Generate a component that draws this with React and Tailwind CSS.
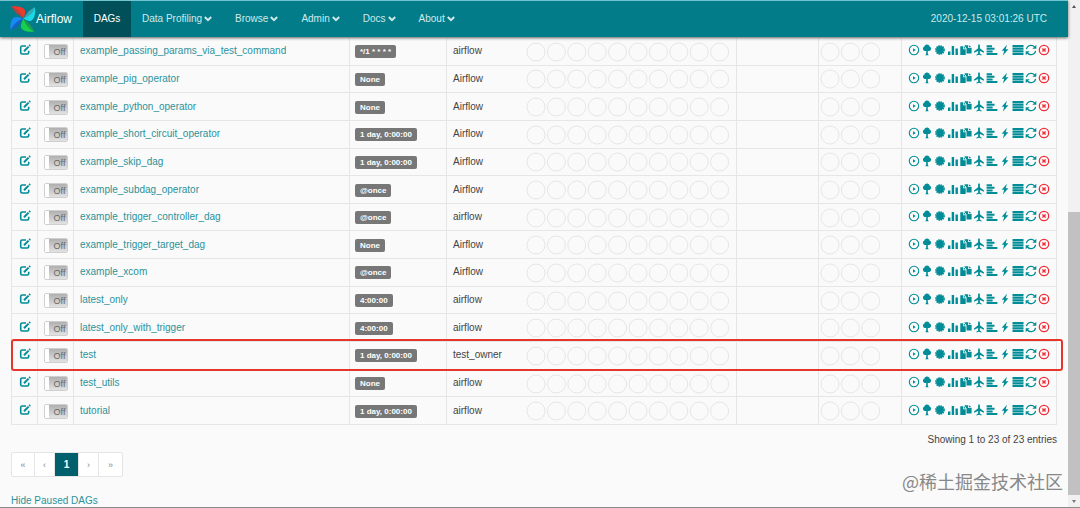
import React from "react";

const rows = [
  ["example_passing_params_via_test_command", "*/1 * * * *", "airflow"],
  ["example_pig_operator", "None", "Airflow"],
  ["example_python_operator", "None", "Airflow"],
  ["example_short_circuit_operator", "1 day, 0:00:00", "Airflow"],
  ["example_skip_dag", "1 day, 0:00:00", "Airflow"],
  ["example_subdag_operator", "@once", "Airflow"],
  ["example_trigger_controller_dag", "@once", "airflow"],
  ["example_trigger_target_dag", "None", "Airflow"],
  ["example_xcom", "@once", "Airflow"],
  ["latest_only", "4:00:00", "airflow"],
  ["latest_only_with_trigger", "4:00:00", "airflow"],
  ["test", "1 day, 0:00:00", "test_owner"],
  ["test_utils", "None", "airflow"],
  ["tutorial", "1 day, 0:00:00", "airflow"],
];

const icons = {
  Trigger: (
    <g>
      <circle cx="6" cy="6" r="4.7" fill="none" stroke="currentColor" strokeWidth="1.1" />
      <path d="M5 4.300 7.800 6 5 7.700z" />
    </g>
  ),
  "Tree view": (
    <path d="M6 .6c1.500 0 2.500 1 2.700 2.100 1 .4 1.500 1.200 1.300 2.200-.2 1.300-1.200 2.200-2.500 2.200-.3 0-.5 0-.7-.1v2.600l.8 1.600H4.400l.8-1.600V7c-.2.1-.4.1-.7.1C3.200 7.100 2.200 6.200 2 4.900c-.2-1 .3-1.800 1.300-2.200C3.500 1.600 4.500.6 6 .6z" />
  ),
  "Graph view": (
    <g>
      <circle cx="6" cy="6" r="3.900" />
      <circle cx="6" cy="6" r="4.200" fill="none" stroke="currentColor" strokeWidth="1.400" strokeDasharray="1.400 .799" />
    </g>
  ),
  "Task duration": <path d="M1 7.500h2.400V11H1zM4.700 2h2.400v9H4.700zM8.500 4.500h2.400V11H8.500z" />,
  "Task tries": (
    <path d="M.3 2.300h2.900v2.900h2.500v5.800H.3zM3.900 2.300 5.700 4.400H3.900zM4.600 1.200h3.500v2.900h3.500V9.500H6.500V4.200L4.600 2.100zM8.900 1.200l2.600 2.100H8.900z" />
  ),
  "Landing times": (
    <path d="M6 .3c.6 0 .9.800.9 1.600v2.300L11 7.500v1.300L6.900 7.100v2.300l1.700 1.300v.8L6 10.800l-2.600.7v-.8l1.700-1.300V7.100L1 8.800V7.500l4.100-3.300V1.900C5.100 1.100 5.400.3 6 .3z" />
  ),
  Gantt: <path d="M.6 1.200h5.400v2H.6zM.6 3.800h7.900v2H.6zM.6 6.400h6v2h-6zM.6 9h10.800v2H.6z" />,
  Code: <path d="M8 .7 2.700 6.700h2.500L3.900 11.500l5.500-6.300H6.700z" />,
  Logs: <path d="M.5 1.100h11v2.100H.5zM.5 3.700h11v2.100H.5zM.5 6.300h11v2.100H.5zM.5 8.900h11V11H.5z" />,
  Refresh: (
    <g>
      <path d="M1.400 5.200A4.700 4.700 0 0 1 9.600 3M10.600 6.800A4.700 4.700 0 0 1 2.400 9" fill="none" stroke="currentColor" strokeWidth="1.200" />
      <path d="M11.300.8v3.900H7.400zM.7 11.200V7.300h3.900z" />
    </g>
  ),
  Delete: (
    <g fill="none" stroke="currentColor">
      <circle cx="6" cy="6" r="4.700" strokeWidth="1.300" />
      <path d="m4.400 4.400 3.200 3.200m0-3.200L4.400 7.600" strokeWidth="1.400" />
    </g>
  ),
};

function Logo() {
  return (
    <svg viewBox="0 0 26 28" className="h-7 w-[26px] shrink-0" aria-hidden="true">
      <path d="M1 1.500C6 .8 12 1.200 14.500 4.500c1.200 2 .5 5-1 9L10 8.500C8 5.500 5 3.500 1 1.500z" fill="#f0382b" />
      <path d="M1 1.500 5.500 7.500 13.500 13.500C12 8 7 4 1 1.500z" fill="#b3443f" />
      <path d="M24.800 2c.9 6 .2 11-3.300 13.500-2 1.200-5 .2-8-2l5-3C21.500 8.500 23.500 6 24.800 2z" fill="#14dbe6" />
      <path d="M24.800 2 18.500 6.500 13.500 13.500C18.500 12 22.500 8 24.800 2z" fill="#3fa8b5" />
      <path d="M24.500 26.500c-5 .8-10.500.2-13-3-1.300-2-.2-6 2-10l3 5.500c2 3 4.500 5.500 8 7.500z" fill="#18cf4d" />
      <path d="M24.500 26.500 20.500 20 13.500 13.500C15 19 18.500 23.500 24.500 26.500z" fill="#1b9a55" />
      <path d="M.8 25.500c-.8-5-.3-10.500 3-13 2-1.200 6-.5 9.700 1L8 17c-3 2-5.500 4.500-7.200 8.500z" fill="#168bf4" />
      <path d="M.8 25.500 7.500 21l6-7.500C8 15 3.500 19 .8 25.500z" fill="#1660ca" />
    </svg>
  );
}

function Chevron() {
  return (
    <svg viewBox="0 0 8 6" className="h-[6px] w-2" aria-hidden="true">
      <path d="m.8 1 3.200 3.200L7.200 1" fill="none" stroke="currentColor" strokeWidth="2" />
    </svg>
  );
}

function Circles({ count }) {
  return (
    <svg viewBox={count === 10 ? "0 0 206 20" : "0 0 62 20"} className={count === 10 ? "h-5 w-[206px]" : "h-5 w-[62px]"} aria-hidden="true">
      {Array.from({ length: count }, (_, i) => (
        <circle key={i} cx={11 + i * 20.4} cy="10" r="9" fill="none" stroke="#e6e6e6" />
      ))}
    </svg>
  );
}

const cell = "border border-[#e6e6e6] p-0 align-middle";

function Row({ dag }) {
  const [name, schedule, owner] = dag;
  return (
    <tr>
      <td className={cell}>
        <a href="#edit" aria-label={"Edit " + name} className="flex justify-center pb-[2px] text-[#018d97]">
          <svg viewBox="0 0 12 12" className="h-3 w-3" fill="none" stroke="currentColor">
            <path d="M7 2H3.200Q1.700 2 1.700 3.500v5Q1.700 10 3.200 10h5Q9.700 10 9.700 8.500V6.800" strokeWidth="1.600" />
            <path d="M5 7.200 9.600 2.600" strokeWidth="2" />
            <path d="m10.200 2 1-1" strokeWidth="1.800" />
          </svg>
        </a>
      </td>
      <td className={cell}>
        <button aria-label={"Toggle " + name} className="mx-auto mt-px flex h-[15px] w-6 overflow-hidden rounded-xs border border-[#cfcfcf] bg-white text-[9px] leading-[14px] text-[#666]">
          <span className="w-1 shrink-0 bg-white" />
          <span className="flex-1 bg-linear-to-b from-[#b0b0b0] to-[#e2e2e2] pl-1">Off</span>
        </button>
      </td>
      <td className={cell + " pl-[6px]"}><a href="#dag" className="text-[#2b929b]">{name}</a></td>
      <td className={cell + " pl-[5px]"}>
        <a href="#schedule" className="inline-block rounded-xs bg-[#777] px-[5px] text-[8px] leading-[13px] font-bold text-white">{schedule}</a>
      </td>
      <td className={cell + " border-r-0 pl-[6px]"}>{owner}</td>
      <td className={cell + " border-l-0"}><div className="flex justify-end pt-px pr-[5px]"><Circles count={10} /></div></td>
      <td className={cell} />
      <td className={cell}><div className="flex pt-px"><Circles count={3} /></div></td>
      <td className={cell}>
        <div className="flex justify-end gap-px pr-[6px] pb-[2px]">
          {Object.entries(icons).map(([label, shape]) => (
            <a key={label} href="#action" aria-label={label + " " + name} className={label === "Delete" ? "text-[#f32d37]" : "text-[#018d97]"}>
              <svg viewBox="0 0 12 12" className="h-3 w-3" fill="currentColor">{shape}</svg>
            </a>
          ))}
        </div>
      </td>
    </tr>
  );
}

export default function App() {
  return (
    <div className="flex h-screen overflow-hidden border-b border-[#8c8c8c] bg-[#fafafa] font-['Liberation_Sans',Arial,sans-serif] text-[10px] leading-[14px] text-[#444]">
      <div className="flex min-w-0 flex-1 flex-col">
        <header className="z-10 flex h-[37px] shrink-0 items-stretch border-t border-[#70c5d0] bg-[#017c88] text-[10px] text-[#d2e9eb] shadow-[0_1px_3px_#666]">
          <a href="#home" className="flex w-[83px] items-center pl-[10px] text-[12px] text-white"><Logo />Airflow</a>
          <nav className="flex items-stretch">
            <a href="#dags" className="flex w-12 items-center justify-center bg-[#015059] text-white">DAGs</a>
            {["Data Profiling", "Browse", "Admin", "Docs", "About"].map((item) => (
              <button key={item} className="flex items-center gap-[2px] pr-3 pl-[11px]">{item}<Chevron /></button>
            ))}
          </nav>
          <time className="ml-auto flex items-center pr-[21px]">2020-12-15 03:01:26 UTC</time>
        </header>
        <main className="relative flex-1 pr-[11px] pl-[11px]">
          <table className="h-[388px] w-full table-fixed border-collapse">
            <colgroup>
              <col className="w-[26px]" /><col className="w-9" /><col className="w-[276px]" />
              <col className="w-[97px]" /><col className="w-[72px]" /><col className="w-[218px]" />
              <col className="w-[82px]" /><col className="w-[83px]" /><col />
            </colgroup>
            <tbody>{rows.map((dag) => <Row key={dag[0]} dag={dag} />)}</tbody>
          </table>
          <div className="absolute top-[302px] right-[5px] left-[11px] h-8 rounded-[3px] border-2 border-[#e8352b]" />
          <p className="mt-2 text-right">Showing 1 to 23 of 23 entries</p>
          <nav aria-label="Pagination" className="mt-[5px] flex h-[25px] w-fit divide-x divide-[#e5e5e5] rounded-xs border border-[#e5e5e5] bg-white text-[9px] text-[#888]">
            {["«", "‹", "1", "›", "»"].map((item) => (
              <button key={item} className={item === "1" ? "w-6 bg-[#01606b] text-[10px] font-bold text-white" : item === "‹" || item === "›" ? "w-5" : "w-[23px]"}>{item}</button>
            ))}
          </nav>
          <a href="#paused" className="mt-[17px] inline-block text-[#2b929b]">Hide Paused DAGs</a>
          <p className="absolute right-[5px] bottom-[13px] font-['Noto_Sans_CJK_SC',sans-serif] text-[18px] leading-7 text-[#888]">@稀土掘金技术社区</p>
        </main>
      </div>
      <div className="flex w-3 shrink-0 flex-col bg-[#f1f1f1]" aria-hidden="true">
        <svg viewBox="0 0 12 12" className="h-3 w-3"><path d="m4 8 2-3 2 3z" fill="#555" /></svg>
        <div className="mt-auto h-[283px] bg-[#c1c1c1]" />
        <svg viewBox="0 0 12 12" className="h-3 w-3"><path d="m4 5 2 3 2-3z" fill="#777" /></svg>
      </div>
    </div>
  );
}
